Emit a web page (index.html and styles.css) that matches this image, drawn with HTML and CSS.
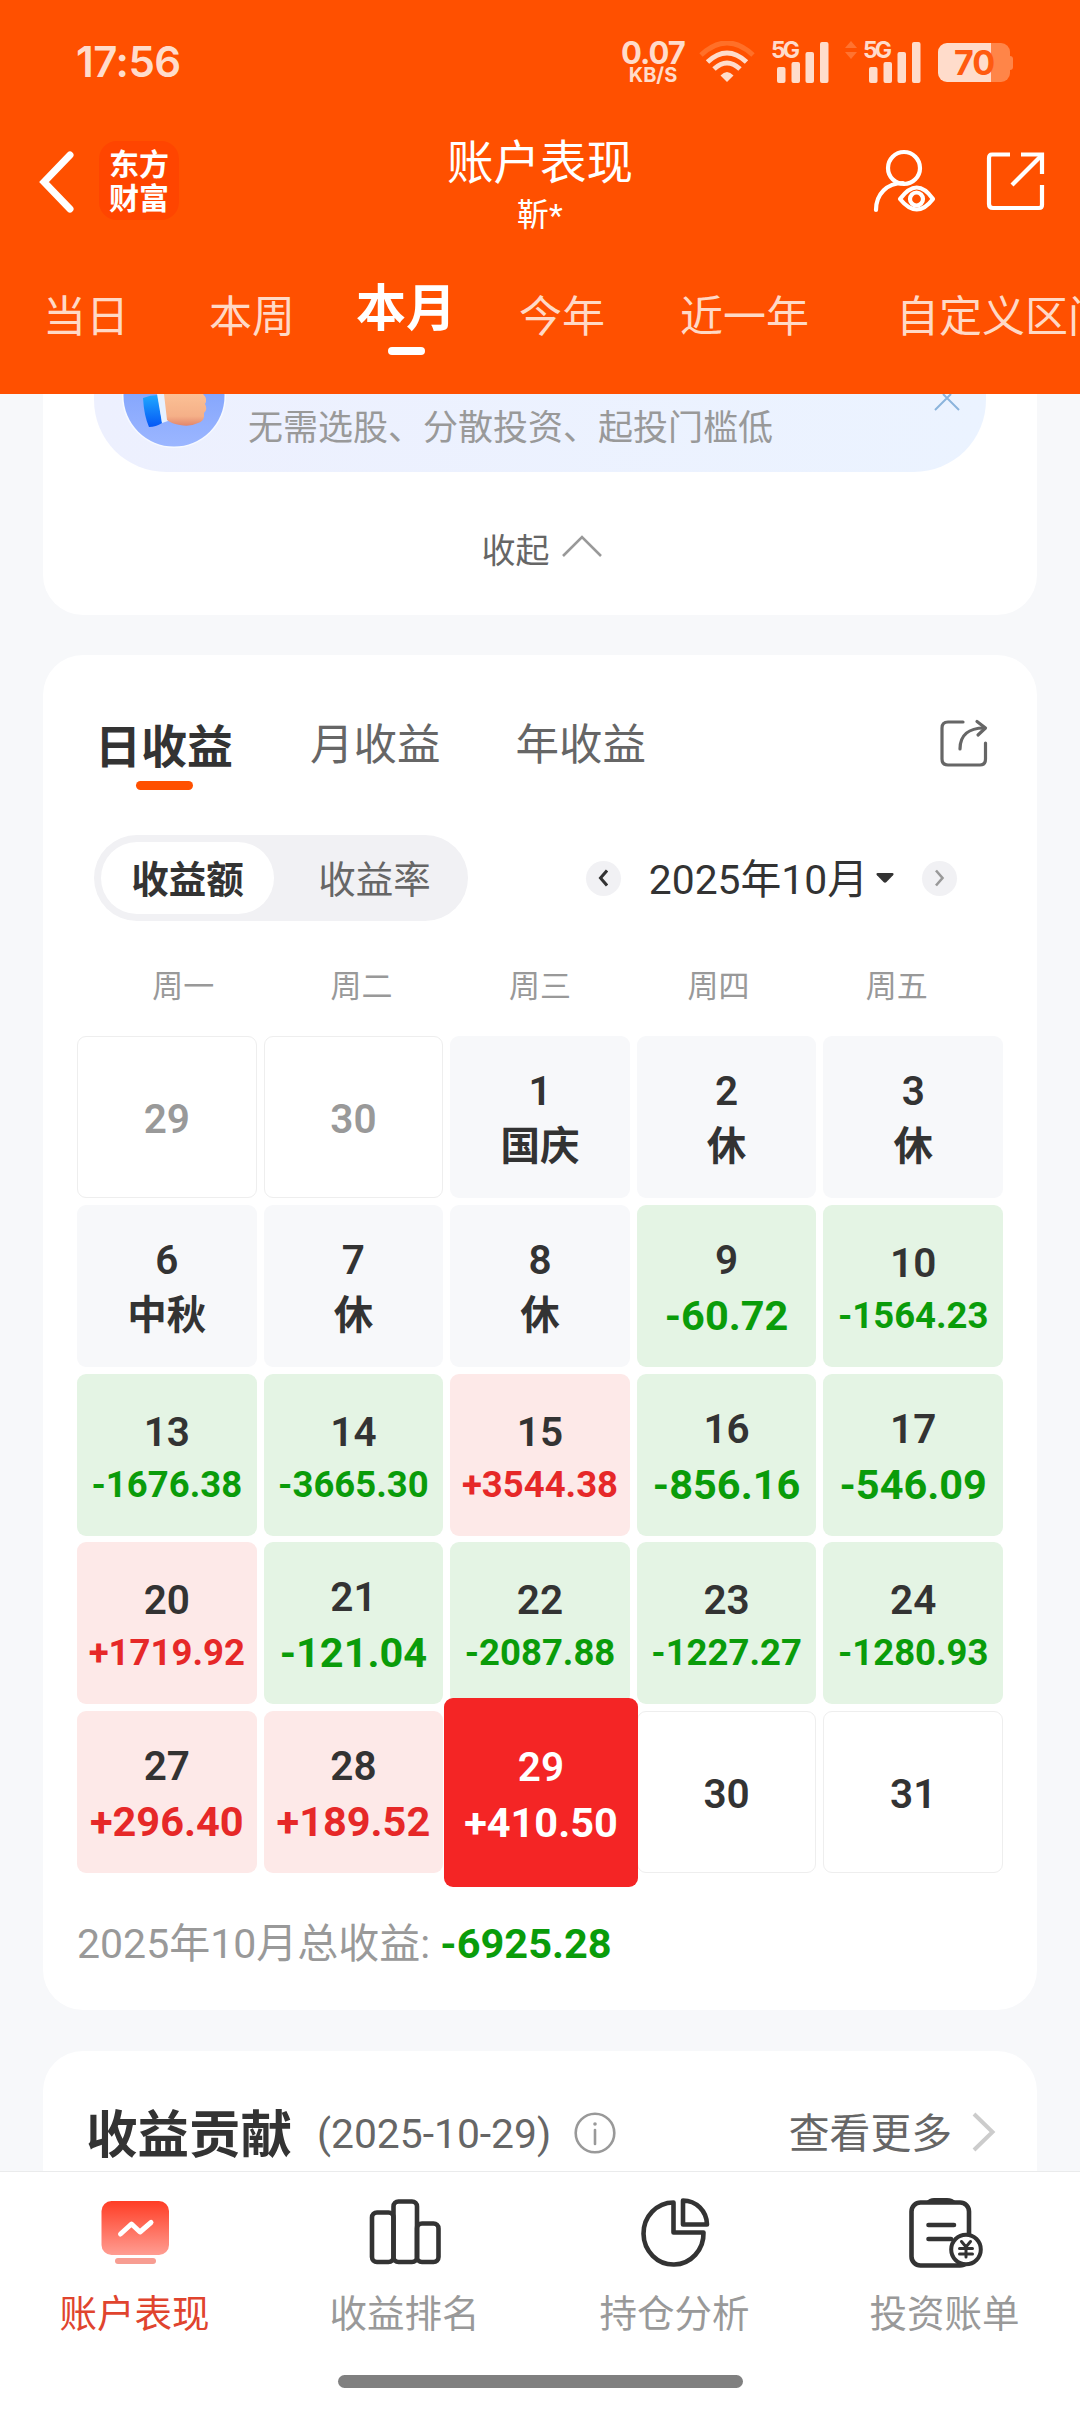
FILE: index.html
```html
<!DOCTYPE html>
<html lang="zh-CN">

<head>
    <meta charset="UTF-8">
    <meta name="viewport" content="width=device-width, initial-scale=1.0">
    <title>账户表现</title>
    <link rel="stylesheet" href="styles.css">
</head>

<body>

    <header class="header">
        <div class="status-bar">
            <span class="clock">17:56</span>
            <div class="net-speed">
                <span class="speed">0.07</span>
                <span class="unit">KB/S</span>
            </div>
            <svg class="wifi" width="56" height="42" viewBox="0 0 56 42" fill="none" stroke="#ffdccb" stroke-width="5">
                <path d="M2 14 Q28 -10 54 14" stroke="#ff7028" />
                <path d="M8.500 21 Q28 3 47.500 21" />
                <path d="M15 28 Q28 16 41 28" />
                <path d="M28 41 L21.500 34.500 Q28 27.500 34.500 34.500 Z" fill="#ffdccb" stroke="none" />
            </svg>
            <div class="signal signal-one">
                <span class="net-type">5G</span>
                <svg width="58" height="42" viewBox="0 0 58 42" fill="#ffdccb">
                    <rect x="6" y="26" width="8.500" height="16" rx="2" />
                    <rect x="20.500" y="21" width="8.500" height="21" rx="2" />
                    <rect x="34.500" y="11" width="8.500" height="31" rx="2" />
                    <rect x="49" y="1" width="8.500" height="41" rx="2" />
                </svg>
            </div>
            <svg class="updown" width="12" height="18" viewBox="0 0 12 18" fill="#ff7330">
                <path d="M6 0 L12 7 H0 Z" />
                <path d="M6 18 L12 11 H0 Z" />
            </svg>
            <div class="signal">
                <span class="net-type">5G</span>
                <svg width="58" height="42" viewBox="0 0 58 42" fill="#ffdccb">
                    <rect x="6" y="26" width="8.500" height="16" rx="2" />
                    <rect x="20.500" y="21" width="8.500" height="21" rx="2" />
                    <rect x="34.500" y="11" width="8.500" height="31" rx="2" />
                    <rect x="49" y="1" width="8.500" height="41" rx="2" />
                </svg>
            </div>
            <div class="battery">70</div>
            <span class="battery-tip"></span>
        </div>

        <div class="title-bar">
            <svg class="back" width="38" height="64" viewBox="0 0 38 64" fill="none" stroke="#fff" stroke-width="7" stroke-linecap="round">
                <path d="M34 5 L8 32 L34 59" />
            </svg>
            <div class="logo">东方<br>财富</div>
            <div class="title">
                <h1>账户表现</h1>
                <p>靳*</p>
            </div>
            <svg class="user-icon" width="64" height="66" viewBox="0 0 64 66" fill="none" stroke="#fff" stroke-width="4.200" stroke-linecap="round">
                <circle cx="32" cy="19" r="16" />
                <path d="M4 61 C4 45 15 34 31 34" />
                <path d="M28 50 Q45 27 61 50 Q45 71 28 50 Z" stroke-linejoin="round" />
                <circle cx="44.500" cy="50" r="6.500" />
            </svg>
            <svg class="share-icon" width="60" height="60" viewBox="0 0 60 60" fill="none" stroke="#fff" stroke-width="4.200">
                <path d="M25 3.500 H7 Q4 3.500 4 7 V53 Q4 57 8 57 H54 Q57 57 57 54 V34" />
                <path d="M36 3.500 H57 V23" />
                <path d="M57 4 L27 34" />
            </svg>
        </div>

        <div class="period-tabs">
            <span class="period">当日</span>
            <span class="period">本周</span>
            <span class="period active">本月</span>
            <span class="period">今年</span>
            <span class="period">近一年</span>
            <span class="period">自定义区间</span>
        </div>
    </header>

    <main class="content">
        <section class="card card-top">
            <div class="banner">
                <svg class="banner-icon" width="104" height="54" viewBox="0 0 104 54">
                    <defs>
                        <linearGradient id="avatar" x1="0" y1="0" x2="0" y2="1">
                            <stop offset="0" stop-color="#7399fb" />
                            <stop offset="1" stop-color="#9bb6ff" />
                        </linearGradient>
                        <linearGradient id="cuff" x1="0" y1="0" x2="0" y2="1">
                            <stop offset="0" stop-color="#20a8ff" />
                            <stop offset="1" stop-color="#0557f5" />
                        </linearGradient>
                        <linearGradient id="hand" x1="0" y1="0" x2="0" y2="1">
                            <stop offset="0" stop-color="#fbc095" />
                            <stop offset="0.700" stop-color="#f5b088" />
                            <stop offset="1" stop-color="#e2866c" />
                        </linearGradient>
                    </defs>
                    <circle cx="52" cy="2" r="52" fill="#f6f9ff" />
                    <circle cx="52" cy="2" r="50.500" fill="url(#avatar)" />
                    <path d="M21 4 Q28 1 36 1 L40 29 Q34 33 27 33 Q22 22 21 4 Z" fill="url(#cuff)" />
                    <path d="M35 0 H43 L46 27 L40 29 Z" fill="#e6f1ff" />
                    <path d="M42 0 H81 Q86 5 83 10 Q86 15 82 19 Q83 27 76 29 Q68 33 58 31 Q50 30 45 26 Z" fill="url(#hand)" />
                </svg>
                <span class="banner-text">无需选股、分散投资、起投门槛低</span>
                <svg class="close" width="26" height="18" viewBox="0 0 26 18" fill="none" stroke="#8bb4dc" stroke-width="2">
                    <path d="M1 16 L17 0 M25 16 L9 0" />
                </svg>
            </div>
            <div class="collapse">
                <span>收起</span>
                <svg width="40" height="24" viewBox="0 0 40 24" fill="none" stroke="#999" stroke-width="2.600">
                    <path d="M1 22 L20 3 L39 22" />
                </svg>
            </div>
        </section>

        <section class="card calendar-card">
            <div class="profit-tabs">
                <span class="profit-tab active">日收益</span>
                <span class="profit-tab">月收益</span>
                <span class="profit-tab">年收益</span>
                <svg class="export" width="50" height="50" viewBox="0 0 50 50" fill="none" stroke="#666" stroke-width="3.200" stroke-linecap="round" stroke-linejoin="round">
                    <path d="M24 4 H9 Q3 4 3 10 V41 Q3 47 9 47 H41 Q46.500 47 46.500 41 V25" />
                    <path d="M21 31 C21 17 30 10 45 10" />
                    <path d="M38 3.500 L46.500 10 L39 17" />
                </svg>
            </div>

            <div class="toolbar">
                <div class="switch">
                    <span class="option selected">收益额</span>
                    <span class="option">收益率</span>
                </div>
                <div class="month-picker">
                    <span class="arrow">
                        <svg width="10" height="18" viewBox="0 0 10 18" fill="none" stroke="#333" stroke-width="3">
                            <path d="M9 1.500 L2.500 9 L9 16.500" />
                        </svg>
                    </span>
                    <span class="month">2025年10月</span>
                    <svg class="caret" width="18" height="10" viewBox="0 0 18 10" fill="#333">
                        <path d="M1.500 0 H16.500 Q18.500 0.500 17 2.200 L10.500 9 Q9 10.300 7.500 9 L1 2.200 Q-0.500 0.500 1.500 0 Z" />
                    </svg>
                    <span class="arrow">
                        <svg width="10" height="18" viewBox="0 0 10 18" fill="none" stroke="#999" stroke-width="2.600">
                            <path d="M1 1.500 L7.500 9 L1 16.500" />
                        </svg>
                    </span>
                </div>
            </div>

            <div class="weekdays">
                <span>周一</span>
                <span>周二</span>
                <span>周三</span>
                <span>周四</span>
                <span>周五</span>
            </div>

            <div class="days">
                <div class="day empty other"><b>29</b></div>
                <div class="day empty other"><b>30</b></div>
                <div class="day"><b>1</b><span class="rest">国庆</span></div>
                <div class="day"><b>2</b><span class="rest">休</span></div>
                <div class="day"><b>3</b><span class="rest">休</span></div>

                <div class="day"><b>6</b><span class="rest">中秋</span></div>
                <div class="day"><b>7</b><span class="rest">休</span></div>
                <div class="day"><b>8</b><span class="rest">休</span></div>
                <div class="day loss"><b>9</b><span>-60.72</span></div>
                <div class="day loss"><b>10</b><span class="small">-1564.23</span></div>

                <div class="day loss"><b>13</b><span class="small">-1676.38</span></div>
                <div class="day loss"><b>14</b><span class="small">-3665.30</span></div>
                <div class="day gain"><b>15</b><span class="small">+3544.38</span></div>
                <div class="day loss"><b>16</b><span>-856.16</span></div>
                <div class="day loss"><b>17</b><span>-546.09</span></div>

                <div class="day gain"><b>20</b><span class="small">+1719.92</span></div>
                <div class="day loss"><b>21</b><span>-121.04</span></div>
                <div class="day loss"><b>22</b><span class="small">-2087.88</span></div>
                <div class="day loss"><b>23</b><span class="small">-1227.27</span></div>
                <div class="day loss"><b>24</b><span class="small">-1280.93</span></div>

                <div class="day gain"><b>27</b><span>+296.40</span></div>
                <div class="day gain"><b>28</b><span>+189.52</span></div>
                <div class="day today"><b>29</b><span>+410.50</span></div>
                <div class="day empty"><b>30</b></div>
                <div class="day empty"><b>31</b></div>
            </div>

            <p class="total">2025年10月总收益: <b>-6925.28</b></p>
        </section>

        <section class="card contribution">
            <h2>收益贡献</h2>
            <span class="date">(2025-10-29)</span>
            <svg class="info" width="42" height="42" viewBox="0 0 42 42" fill="none" stroke="#999" stroke-width="2.600">
                <circle cx="21" cy="21" r="19.300" />
                <path d="M21 18 V32" stroke-linecap="round" />
                <circle cx="21" cy="12" r="1.800" fill="#999" stroke="none" />
            </svg>
            <span class="more">查看更多</span>
            <svg class="more-arrow" width="24" height="40" viewBox="0 0 24 40" fill="none" stroke="#ccc" stroke-width="4">
                <path d="M2 2 L20.500 20 L2 38" />
            </svg>
        </section>
    </main>

    <nav class="bottom-nav">
        <div class="nav-items">
            <a class="nav-item current">
                <svg width="80" height="80" viewBox="0 0 80 80">
                    <defs>
                        <linearGradient id="screen" x1="0" y1="0" x2="0" y2="1">
                            <stop offset="0" stop-color="#ff3d25" />
                            <stop offset="1" stop-color="#ff9d92" />
                        </linearGradient>
                    </defs>
                    <rect x="6.500" y="10" width="67.500" height="54" rx="10" fill="url(#screen)" />
                    <rect x="20" y="67" width="41" height="6" rx="3" fill="#f79d92" />
                    <path d="M25.500 43 L36.500 33 L45 41 L56 31.500" fill="none" stroke="#fff" stroke-width="5" stroke-linecap="round" stroke-linejoin="round" />
                </svg>
                <span>账户表现</span>
            </a>
            <a class="nav-item">
                <svg width="80" height="80" viewBox="0 0 80 80" fill="none" stroke="#333" stroke-width="4.600">
                    <rect x="7" y="21.500" width="21.500" height="49.500" rx="5" />
                    <rect x="28.500" y="10.500" width="23.500" height="60.500" rx="5" />
                    <rect x="52" y="32.500" width="21.500" height="38.500" rx="5" />
                </svg>
                <span>收益排名</span>
            </a>
            <a class="nav-item">
                <svg width="80" height="80" viewBox="0 0 80 80" fill="none" stroke="#333" stroke-width="4.600" stroke-linejoin="round">
                    <path d="M38.500 11.500 A30 31 0 1 0 68.500 41.500 H38.500 Z" />
                    <path d="M48 9.500 A24 24.500 0 0 1 72 33.500 H48 Z" />
                </svg>
                <span>持仓分析</span>
            </a>
            <a class="nav-item">
                <svg width="80" height="80" viewBox="0 0 80 80" fill="none" stroke="#333" stroke-width="4.600" stroke-linecap="round">
                    <rect x="6.500" y="11.500" width="57.500" height="63" rx="9" />
                    <path d="M21 11 Q24 7 29 7 H42 Q48 7 51 11 Z" fill="#333" stroke="none" />
                    <path d="M23.500 34 H49 M23.500 48 H46" />
                    <circle cx="61" cy="58.500" r="14.800" fill="#fff" stroke-width="4" />
                    <path d="M56.500 50.500 L61 56 L65.500 50.500 M61 56 V66 M54.500 57.500 H67.500 M54.500 63 H67.500" stroke-width="3" />
                </svg>
                <span>投资账单</span>
            </a>
        </div>
        <div class="home-bar"></div>
    </nav>

</body>

</html>
```
FILE: styles.css
```css
* {
    box-sizing: border-box;
}

body {
    font-family: Roboto, "Noto Sans CJK SC", sans-serif;
    background-color: #f7f8fa;
    color: #333;
    margin: 0;
    width: 1080px;
    height: 2412px;
    overflow: hidden;
    display: flex;
    flex-direction: column;
}

h1,
h2,
p {
    margin: 0;
}

svg {
    display: block;
    flex-shrink: 0;
}

/* header */

.header {
    height: 394px;
    flex-shrink: 0;
    background-color: #ff5000;
    color: #fff;
    overflow: hidden;
}

.status-bar {
    display: flex;
    align-items: flex-start;
    height: 124px;
    padding: 41px 67px 0 76px;
    color: #ffdccb;
    font-family: Inter, Roboto, sans-serif;
    font-weight: 600;
}

.clock {
    font-size: 42px;
    line-height: 42px;
    margin-right: auto;
    letter-spacing: -0.5px;
}

.net-speed {
    display: flex;
    flex-direction: column;
    align-items: center;
    margin-right: 13px;
    width: 66px;
}

.speed {
    font-size: 31px;
    font-weight: 700;
    line-height: 23px;
    letter-spacing: -1px;
}

.unit {
    font-size: 20px;
    font-weight: 700;
    line-height: 20px;
    margin-top: 1px;
}

.wifi {
    margin-right: 16px;
}

.signal {
    position: relative;
}

.signal-one {
    margin-right: 16px;
}

.net-type {
    position: absolute;
    left: 0;
    top: 0;
    font-size: 23px;
    font-weight: 700;
    line-height: 18px;
    letter-spacing: -3px;
}

.updown {
    margin-right: 6px;
}

.battery {
    width: 72px;
    height: 39px;
    margin: 2px 0 0 17px;
    border-radius: 9px;
    background: linear-gradient(to right, #ffdccb 53px, #ff8548 53px);
    color: #ff5a10;
    font-size: 34px;
    font-weight: 700;
    line-height: 39px;
    text-align: center;
    letter-spacing: -1px;
}

.battery-tip {
    width: 3px;
    height: 14px;
    margin-top: 15px;
    background-color: #ff8548;
    border-radius: 0 3px 3px 0;
}

.title-bar {
    display: flex;
    align-items: flex-start;
    height: 138px;
    padding: 17px 36px 0 36px;
}

.back {
    margin-top: 9px;
}

.logo {
    width: 80px;
    height: 79px;
    margin-left: 25px;
    padding-top: 7px;
    border-radius: 18px;
    background-color: #ff4500;
    font-size: 30px;
    font-weight: 700;
    line-height: 34px;
    text-align: center;
}

.title {
    flex: 1;
    padding-left: 29px;
    text-align: center;
}

.title h1 {
    font-size: 46.5px;
    font-weight: 400;
    line-height: 46px;
    margin-top: -1px;
}

.title p {
    font-size: 32px;
    line-height: 36px;
    margin-top: 11px;
}

.user-icon {
    margin: 8px 49px 0 0;
}

.share-icon {
    margin-top: 10px;
    margin-right: -1px;
}

.period-tabs {
    display: flex;
    align-items: flex-start;
    padding-left: 43px;
    white-space: nowrap;
}

.period {
    font-size: 43px;
    line-height: 50px;
    margin: 30px 80px 0 0;
    color: #ffd9c6;
}

.period.active {
    color: #fff;
    font-size: 50px;
    font-weight: 700;
    margin: 22px 63px 0 -19px;
}

.period.active::after {
    content: "";
    display: block;
    width: 37px;
    height: 8px;
    margin: 13px auto 0;
    border-radius: 4px;
    background-color: #fff;
}

.period:nth-child(4) {
    margin-right: 75px;
}

.period:nth-child(5) {
    margin-right: 87px;
}

/* content */

.content {
    flex: 1;
    min-height: 0;
    overflow: hidden;
    padding: 0 43px;
}

.card {
    background-color: #fff;
    border-radius: 40px;
}

.card-top {
    height: 221px;
    padding: 0 51px;
    border-top-left-radius: 0;
    border-top-right-radius: 0;
}

.banner {
    display: flex;
    height: 78px;
    padding: 0 26px 0 28px;
    border-radius: 0 0 72px 72px;
    background: linear-gradient(to right, #edf0fe, #ebf3ff);
}

.banner-text {
    margin: 14px auto 0 22px;
    font-size: 35px;
    line-height: 42px;
    color: #999;
}

.collapse {
    display: flex;
    align-items: center;
    justify-content: center;
    gap: 12px;
    margin-top: 57px;
    padding-left: 3px;
    font-size: 34px;
    line-height: 44px;
    color: #666;
}

.collapse svg {
    margin-top: -10px;
}

.calendar-card {
    height: 1355px;
    margin-top: 40px;
    padding: 1px 34px 0;
}

.profit-tabs {
    display: flex;
    align-items: flex-start;
    margin-top: 61px;
    padding: 0 14px 0 18px;
    height: 118px;
}

.profit-tab {
    font-size: 43.5px;
    line-height: 54px;
    margin: 2px 75px 0 0;
    color: #666;
}

.profit-tab.active {
    font-size: 46px;
    font-weight: 700;
    margin: 3px 77px 0 0;
    color: #333;
}

.profit-tab.active::after {
    content: "";
    display: block;
    width: 57px;
    height: 9px;
    margin: 7px auto 0;
    border-radius: 5px;
    background-color: #ff5000;
}

.export {
    margin: 1px 0 0 auto;
}

.toolbar {
    display: flex;
    align-items: center;
    justify-content: space-between;
    padding: 0 46px 0 17px;
}

.switch {
    display: flex;
    width: 374px;
    height: 86px;
    padding: 7px;
    border-radius: 43px;
    background-color: #f1f1f4;
}

.option {
    flex: none;
    width: 173px;
    height: 72px;
    padding-top: 2px;
    border-radius: 36px;
    font-size: 37.5px;
    line-height: 72px;
    text-align: center;
    color: #666;
    margin-right: 14px;
}

.option.selected {
    background-color: #fff;
    font-weight: 700;
    color: #333;
}

.month-picker {
    display: flex;
    align-items: center;
}

.arrow {
    display: flex;
    align-items: center;
    justify-content: center;
    width: 35px;
    height: 35px;
    border-radius: 50%;
    background-color: #f1f1f4;
}

.month {
    font-size: 40.8px;
    line-height: 48px;
    margin: 4px 8px 0 28px;
}

.caret {
    margin-right: 28px;
}

.weekdays {
    display: flex;
    margin: 43px 17px 0;
}

.weekdays span {
    flex: 1;
    font-size: 31px;
    line-height: 46px;
    text-align: center;
    color: #999;
}

.days {
    display: grid;
    grid-template-columns: repeat(5, 1fr);
    grid-auto-rows: 162px;
    gap: 6.75px 7px;
    margin-top: 26px;
}

.day {
    display: flex;
    flex-direction: column;
    align-items: center;
    justify-content: center;
    padding-top: 4px;
    border-radius: 9px;
    background-color: #f7f8fa;
    font-size: 40.5px;
    line-height: 56px;
    white-space: nowrap;
}

.day b {
    font-weight: 600;
}

.day span {
    font-size: 41.5px;
    font-weight: 700;
}

.day .small {
    font-size: 36.5px;
    line-height: 50px;
}

.day .rest {
    font-size: 39.5px;
}

.loss {
    background-color: #e4f4e4;
}

.loss span {
    color: #0a9c0a;
}

.gain {
    background-color: #fde9e8;
}

.gain span {
    color: #e62828;
}

.empty {
    background-color: #fff;
    border: 1px solid #eee;
}

.other {
    color: #999;
}

/* selected day grows over its neighbours */
.today {
    margin: -13px -8px -14px -6px;
    background-color: #f42525;
    color: #fff;
    z-index: 1;
}

.total {
    margin-top: 46px;
    font-size: 41px;
    line-height: 50px;
    color: #999;
}

.total b {
    font-size: 41.5px;
    color: #0a9c0a;
}

.contribution {
    display: flex;
    align-items: flex-start;
    height: 200px;
    margin-top: 41px;
    padding: 55px 41px 0 43px;
    color: #666;
    font-size: 40.8px;
    line-height: 56px;
}

.contribution h2 {
    font-size: 51.5px;
    line-height: 60px;
    color: #333;
}

.date {
    margin-left: 25px;
}

.info {
    margin: 6px 0 0 23px;
}

.more {
    margin-left: auto;
}

.more-arrow {
    margin: 6px 0 0 20px;
}

/* bottom navigation */

.bottom-nav {
    height: 241px;
    flex-shrink: 0;
    border-top: 1px solid #eaebec;
    background-color: #fff;
}

.nav-items {
    display: flex;
    height: 203px;
}

.nav-item {
    flex: 1;
    display: flex;
    flex-direction: column;
    align-items: center;
    padding-top: 19px;
    font-size: 37.5px;
    line-height: 46px;
    color: #999;
}

.nav-item span {
    margin: 20px 1px 0 0;
}

.nav-item.current {
    color: #e0442e;
}

.home-bar {
    width: 405px;
    height: 13px;
    margin: 0 auto;
    border-radius: 7px;
    background-color: #808080;
}
```
